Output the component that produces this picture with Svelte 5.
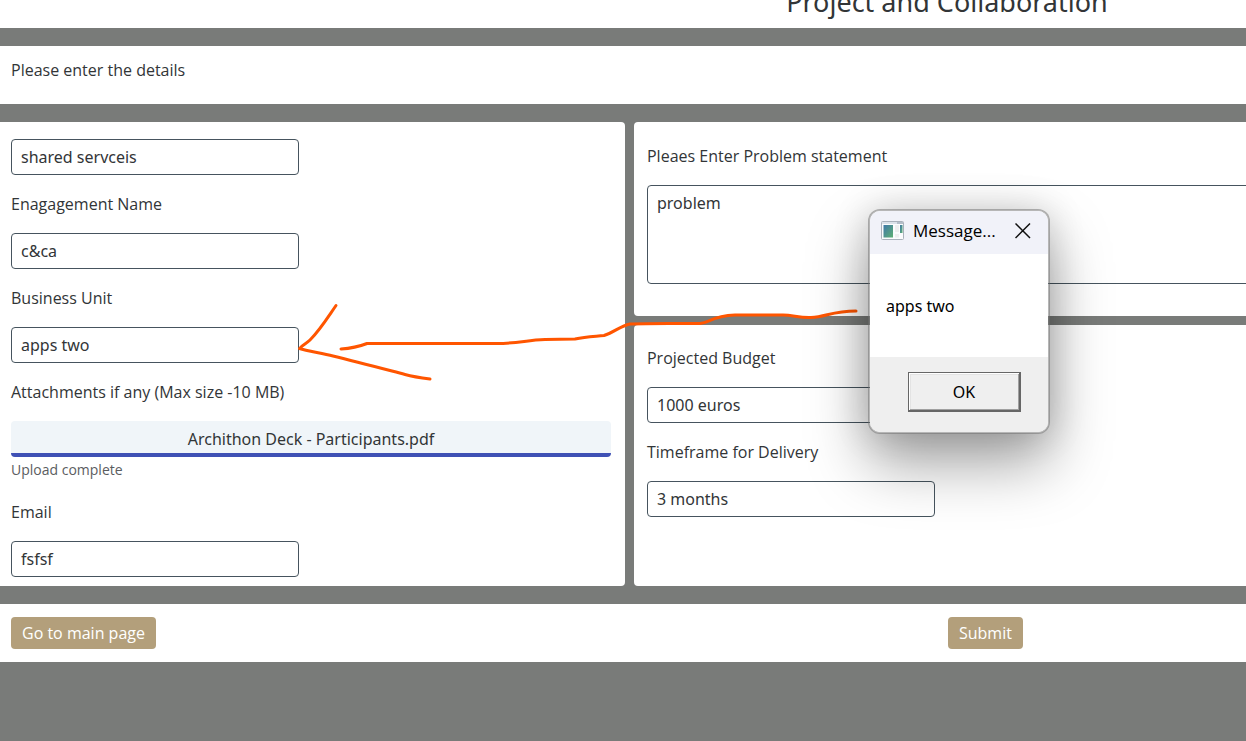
<script>
  let form = $state({
    service: 'shared servceis',
    engagement: 'c&ca',
    unit: 'apps two',
    email: 'fsfsf',
    problem: 'problem',
    budget: '1000 euros',
    timeframe: '3 months'
  });
</script>

<div class="viewport">
  <div class="page">
    <header class="band title"><h1>Project and Collaboration</h1></header>

    <section class="band intro"><p>Please enter the details</p></section>

    <main class="columns">
      <section class="card left">
        <input aria-label="Service" bind:value={form.service} />
        <label for="engagement">Enagagement Name</label>
        <input id="engagement" bind:value={form.engagement} />
        <label for="unit">Business Unit</label>
        <input id="unit" bind:value={form.unit} />
        <label for="attachment">Attachments if any (Max size -10 MB)</label>
        <button id="attachment" class="upload" type="button">Archithon Deck - Participants.pdf</button>
        <p class="hint">Upload complete</p>
        <label for="email">Email</label>
        <input id="email" bind:value={form.email} />
      </section>

      <div class="stack">
        <section class="card right">
          <label for="problem">Pleaes Enter Problem statement</label>
          <textarea id="problem" bind:value={form.problem}></textarea>
        </section>
        <section class="card right grow">
          <label for="budget">Projected Budget</label>
          <input id="budget" bind:value={form.budget} />
          <label for="timeframe">Timeframe for Delivery</label>
          <input id="timeframe" bind:value={form.timeframe} />
        </section>
      </div>
    </main>

    <footer class="band actions">
      <div><button class="action" type="button">Go to main page</button></div>
      <div><button class="action" type="submit">Submit</button></div>
    </footer>
  </div>

  <svg class="arrow" width="570" height="90" viewBox="295 298 570 90" aria-hidden="true">
    <path d="M336 305.500C328 317 320 330 310 340C306 344 302 345 299.500 348.500C307 351 321 353 333 356C358 362 384 369 405 374.500C414 377 422 378 430 379" />
    <path d="M341 349C349 348.500 358 347 367 343.500H497C518 343.500 527 340 545 339.500L575 339C586 336.500 594 336.500 604 335.500C615 332 620 326 630 324C650 323 680 323.500 700 323.500C710 323 711 316 735 315H783C793 315 799 318 811 317.500C826 317 832 311 856 311" />
  </svg>

  <div class="dialog" role="dialog" aria-labelledby="dialog-title">
    <div class="titlebar">
      <svg width="24" height="20" viewBox="0 0 24 20" aria-hidden="true">
        <defs>
          <linearGradient id="pane" x1="0" y1="0" x2="1" y2="1">
            <stop offset="0" stop-color="#3f78a8" />
            <stop offset="1" stop-color="#5fb073" />
          </linearGradient>
        </defs>
        <rect x="0.500" y="0.500" width="22" height="18" rx="1" fill="#fbfcfd" stroke="#aab1bb" />
        <path d="M1 2H16" stroke="#dce2ea" stroke-width="2" />
        <path d="M16 2H22" stroke="#b4bec9" stroke-width="2" />
        <rect x="2.500" y="4" width="9.500" height="12.500" fill="url(#pane)" />
        <rect x="14" y="4" width="4" height="7" fill="#eeeeef" />
        <rect x="19" y="4" width="2.500" height="8" fill="url(#pane)" />
        <rect x="14" y="13" width="4" height="3.500" fill="#eeeeef" />
      </svg>
      <h2 id="dialog-title">Message...</h2>
      <button class="close" type="button" aria-label="Close">
        <svg width="16" height="16" viewBox="0 0 16 16"><path d="M0.500 0.500L15 15M15 0.500L0.500 15" stroke="#111" stroke-width="1.500" /></svg>
      </button>
    </div>
    <p class="message">apps two</p>
    <div class="dialog-actions"><button class="ok" type="button">OK</button></div>
  </div>
</div>

<style>
  :global(body) {
    background: #797b79;
  }
  .viewport {
    position: relative;
    overflow: hidden;
    min-height: 100vh;
    font: 16px/22px "Open Sans", "Noto Sans", sans-serif;
    color: #323537;
  }
  h1, h2, p { margin: 0; font-weight: 400; }
  .page {
    width: 152%;
    display: flex;
    flex-direction: column;
    gap: 18px;
  }
  .band { background: #fff; }
  .title {
    display: flex;
    justify-content: center;
    align-items: flex-end;
    height: 28px;
    overflow: hidden;
  }
  h1 { font-family: "Noto Sans", sans-serif; font-size: 27px; line-height: 36px; padding-bottom: 8px; }
  .intro { padding: 13px 11px 23px; }
  .columns {
    display: grid;
    grid-template-columns: 33% 1fr;
    gap: 9px;
  }
  .stack { display: flex; flex-direction: column; gap: 9px; }
  .grow { flex: 1; }
  .card {
    background: #fff;
    border-radius: 4px;
    display: flex;
    flex-direction: column;
    align-items: flex-start;
  }
  .left { padding: 17px 14px 9px 11px; border-radius: 0 4px 4px 0; }
  .right { padding: 5px 13px 32px; }
  .grow { padding-top: 4px; }
  label { padding: 18px 0; }
  input, textarea {
    box-sizing: border-box;
    font: 16px/22px "Noto Sans", sans-serif;
    color: inherit;
    background: transparent;
    border: 1px solid #46545e;
    border-radius: 4px;
    outline: 0;
  }
  input { width: 288px; height: 36px; padding: 0 9px; }
  textarea { width: 100%; height: 99px; padding: 6px 9px; resize: none; }
  .upload {
    align-self: stretch;
    height: 36px;
    padding: 4px 0 0;
    border: 0;
    border-bottom: 4px solid #3f51b5;
    border-radius: 4px;
    background: #f0f5f9;
    font: 16px/22px "Noto Sans", sans-serif;
    color: inherit;
  }
  .hint { font-size: 14px; line-height: 26px; color: #5b5d5f; }
  .actions { display: grid; grid-template-columns: 1fr 1fr; }
  .actions div { padding: 13px 1px; }
  .actions div:first-child { padding-left: 11px; }
  .action {
    display: block;
    height: 32px;
    padding: 0 11px;
    border: 0;
    border-radius: 4px;
    background: #b39f7b;
    color: #fff;
    font: 500 16px/22px "Open Sans", sans-serif;
  }
  .arrow {
    position: absolute;
    left: 295px;
    top: 298px;
    fill: none;
    stroke: #ff5500;
    stroke-width: 3;
    stroke-linecap: round;
    stroke-linejoin: round;
  }
  .dialog {
    position: absolute;
    left: 868px;
    top: 209px;
    width: 178px;
    border: 2px solid rgba(110, 110, 110, 0.5);
    border-radius: 12px;
    background: #fff;
    background-clip: padding-box;
    overflow: hidden;
    color: #000;
    font: 16px/24px "Noto Sans", sans-serif;
    box-shadow: 0 30px 60px rgba(0, 0, 0, 0.36), 0 0 36px rgba(0, 0, 0, 0.16);
  }
  .titlebar {
    box-sizing: border-box;
    display: flex;
    align-items: center;
    height: 43px;
    padding: 0 17px 3px 11px;
    background: #f1f2f9;
  }
  h2 { font: 17px/24px "Open Sans", sans-serif; margin-left: 8px; flex: 1; }
  .close { display: flex; padding: 0; border: 0; background: none; }
  .message { padding: 40px 16px 39px; }
  .dialog-actions {
    display: flex;
    justify-content: flex-end;
    padding: 15px 27px 20px;
    background: #efefef;
  }
  .ok {
    width: 113px;
    height: 40px;
    padding: 0;
    border: 1px solid #666;
    border-right-width: 2px;
    border-bottom-width: 2px;
    background: #efefef;
    box-shadow: inset 1px 1px #fff, inset -1px -1px #a0a0a0, inset 2px 2px #e3e3e3;
    font: inherit;
    color: inherit;
  }
</style>
